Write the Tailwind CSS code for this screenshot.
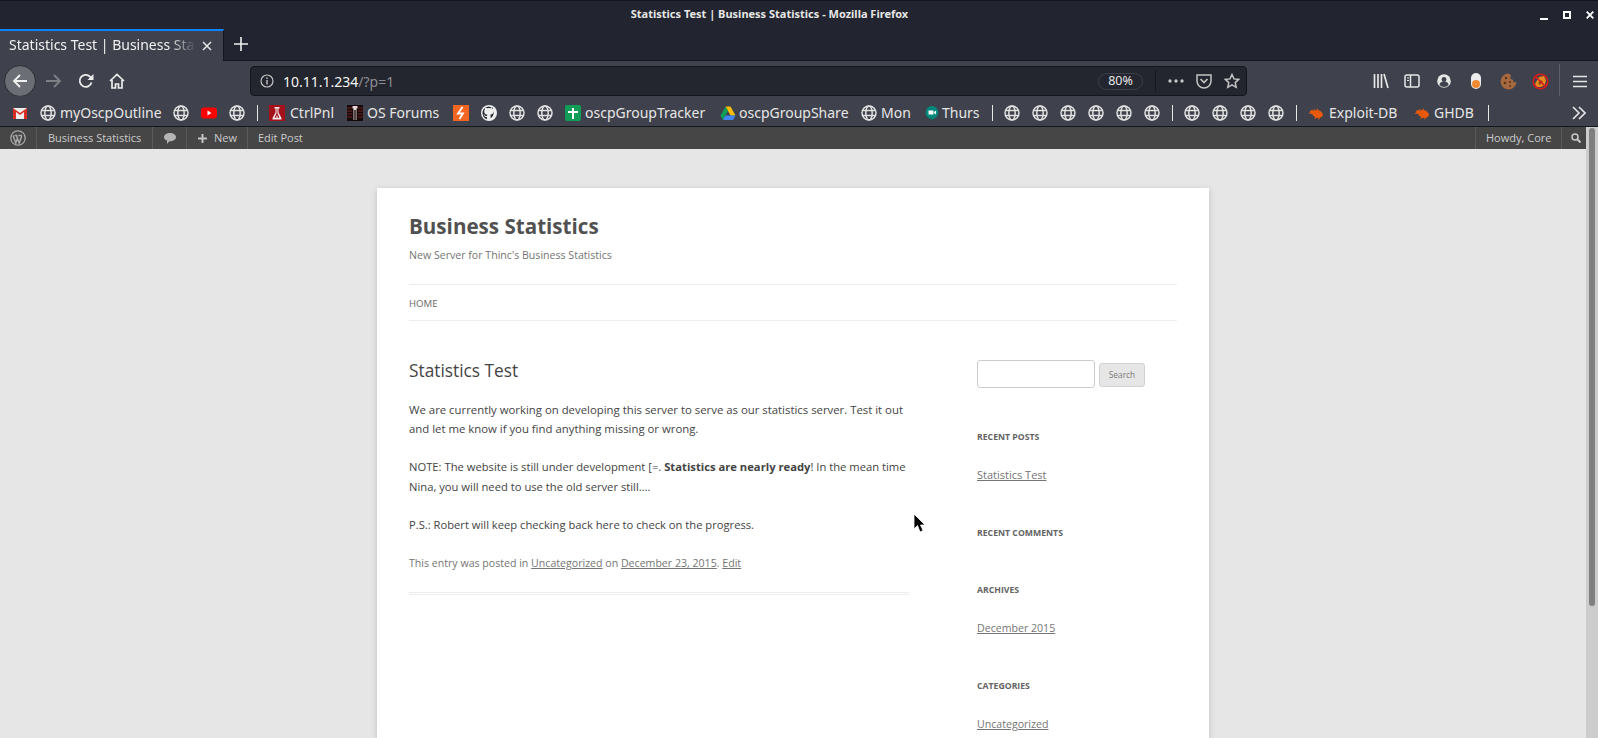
<!DOCTYPE html>
<html lang="en">
<head>
    <meta charset="UTF-8">
    <meta name="viewport" content="width=device-width, initial-scale=1.0">
    <title>Statistics Test | Business Statistics</title>
    <script src="https://cdn.jsdelivr.net/npm/@tailwindcss/browser@4"></script>
</head>
<body class="h-[738px] w-[1598px] overflow-hidden bg-[#22252f] font-['Noto_Sans',sans-serif]">
    <svg class="hidden">
        <symbol id="globe" viewBox="0 0 16 16">
            <g fill="none" stroke="#e0e0e0" stroke-width="1.5">
                <circle cx="8" cy="8" r="7"/>
                <ellipse cx="8" cy="8" rx="3.2" ry="7"/>
                <path d="M1.5 5.5h13M1.5 10.5h13"/>
            </g>
        </symbol>
        <symbol id="bug" viewBox="0 0 16 16">
            <g fill="#e8590c">
                <ellipse cx="9.500" cy="9" rx="5.500" ry="3.800" transform="rotate(15 9.500 9)"/>
                <circle cx="4" cy="7" r="2"/>
            </g>
            <path d="M1 8.500l3-1M5.500 4l2 2.500M9 3.500l1 3M7 14l1-2.500M11 14.500v-2.500" stroke="#e8590c" fill="none"/>
        </symbol>
    </svg>

    <div class="flex h-[738px] flex-col">
        <!-- Title bar -->
        <div class="relative flex h-[29px] shrink-0 items-center justify-center border-t border-[#14161c] bg-[#22252f] pr-[59px] pb-[2px]">
            <span class="text-[11px] font-bold text-[#e6e6e6]">Statistics Test | Business Statistics - Mozilla Firefox</span>
            <div class="absolute top-[9px] right-[4px] flex items-center gap-[15px]">
                <svg class="h-[10px] w-[8px]" viewBox="0 0 8 10"><path d="M0 8h8v2H0z" fill="#fff"/></svg>
                <svg class="h-[8px] w-[8px]" viewBox="0 0 8 8"><path d="M1 1h6v6H1z" fill="none" stroke="#fff" stroke-width="2"/></svg>
                <svg class="h-[8px] w-[8px]" viewBox="0 0 8 8"><path d="M.7.7l6.6 6.6M7.3.7L.7 7.3" stroke="#fff" stroke-width="1.8"/></svg>
            </div>
        </div>

        <!-- Tab bar -->
        <div class="flex h-[32px] shrink-0 items-stretch border-b border-[#14161c] bg-[#22252f]">
            <div class="relative -mb-px flex w-[224px] items-center border-t-2 border-r border-t-[#0a84ff] border-r-[#14161c] bg-[#3f424c] pb-[3px] pl-[9px]">
                <span class="w-[187px] overflow-hidden whitespace-nowrap text-[14px] text-[#f0f0f0] [mask-image:linear-gradient(to_right,black_160px,transparent_187px)]">Statistics Test | Business Statistics</span>
                <svg class="absolute left-[202px] top-[10px] h-[10px] w-[10px]" viewBox="0 0 10 10"><path d="M1 1l8 8M9 1l-8 8" stroke="#e6e6e6" stroke-width="1.5"/></svg>
            </div>
            <svg class="ml-[10px] mt-[8px] h-[14px] w-[14px]" viewBox="0 0 14 14"><path d="M7 0v14M0 7h14" stroke="#f0f0f0" stroke-width="1.6"/></svg>
        </div>

        <!-- Navigation toolbar -->
        <div class="relative flex h-[35px] shrink-0 items-center bg-[#3f424c] pt-[5px]">
            <div class="absolute left-[4px] top-[4px] flex h-[32px] w-[32px] items-center justify-center rounded-full border border-[#2b2d35] bg-[#6c6e75]">
                <svg class="h-[16px] w-[16px]" viewBox="0 0 16 16"><path d="M15 8H2M8 2L2 8l6 6" fill="none" stroke="#f2f2f2" stroke-width="1.8"/></svg>
            </div>
            <svg class="ml-[45px] h-[16px] w-[17px]" viewBox="0 0 17 16"><path d="M1 8h14M9 2l6 6-6 6" fill="none" stroke="#7f8187" stroke-width="1.8"/></svg>
            <svg class="ml-[16px] h-[16px] w-[16px]" viewBox="0 0 16 16"><path d="M13.5 9.5A6 6 0 1 1 12 3.6L14 6" fill="none" stroke="#ececec" stroke-width="1.8"/><path d="M15.5 1v6h-6z" fill="#ececec"/></svg>
            <svg class="ml-[15px] h-[16px] w-[16px]" viewBox="0 0 16 16"><path d="M1 8l7-6.5L15 8M3 7v8h3.5v-4h3v4H13V7" fill="none" stroke="#ececec" stroke-width="1.7"/></svg>

            <!-- URL bar -->
            <div class="relative ml-[125px] flex h-[30px] w-[997px] items-center rounded-[4px] border border-[#14161c] bg-[#23252f] pl-[9px]">
                <svg class="h-[14px] w-[14px]" viewBox="0 0 14 14"><circle cx="7" cy="7" r="6" fill="none" stroke="#c4c4c4" stroke-width="1.2"/><path d="M7 6v4.500M7 3.400v1.500" stroke="#c4c4c4" stroke-width="1.400"/></svg>
                <span class="ml-[9px] text-[14px] text-[#f5f5f5]">10.11.1.234<span class="text-[#8b8c91]">/?p=1</span></span>
                <div class="ml-auto flex items-center">
                    <span class="flex h-[17px] w-[45px] items-center justify-center rounded-full border border-[#3c3f4a] text-[12.5px] text-[#e6e6e6]">80%</span>
                    <span class="ml-[12px] h-[22px] w-px bg-[#14161c]"></span>
                    <svg class="ml-[12px] h-[4px] w-[16px]" viewBox="0 0 16 4"><circle cx="2" cy="2" r="1.700" fill="#c4c4c4"/><circle cx="8" cy="2" r="1.700" fill="#c4c4c4"/><circle cx="14" cy="2" r="1.700" fill="#c4c4c4"/></svg>
                    <svg class="ml-[12px] h-[16px] w-[16px]" viewBox="0 0 16 16"><path d="M1 2h14v6a7 7 0 0 1-14 0z" fill="none" stroke="#c4c4c4" stroke-width="1.500"/><path d="M4.500 6L8 9.500 11.500 6" fill="none" stroke="#c4c4c4" stroke-width="1.700"/></svg>
                    <svg class="ml-[12px] mr-[6px] h-[16px] w-[16px]" viewBox="0 0 16 16"><path d="M8 1.500l2 4.400 4.700.5-3.500 3.200 1 4.700L8 11.900l-4.200 2.400 1-4.700L1.300 6.400 6 5.900z" fill="none" stroke="#c4c4c4" stroke-width="1.500"/></svg>
                </div>
            </div>

            <!-- Toolbar icons -->
            <svg class="ml-[126px] h-[16px] w-[16px]" viewBox="0 0 16 16"><path d="M1.500 1v14M5 1v14M8.500 1v14M11 1l4 14" stroke="#e6e6e6" stroke-width="1.700" fill="none"/></svg>
            <svg class="ml-[15px] h-[16px] w-[16px]" viewBox="0 0 16 16"><rect x="1" y="2" width="14" height="12" rx="2" fill="none" stroke="#e6e6e6" stroke-width="1.500"/><path d="M6.500 2v12" stroke="#e6e6e6" stroke-width="1.500"/><path d="M3 5h2M3 7.500h2" stroke="#e6e6e6"/></svg>
            <svg class="ml-[17px] h-[14px] w-[14px]" viewBox="0 0 14 14"><circle cx="7" cy="7" r="6.800" fill="#e6e6e6"/><circle cx="7" cy="5.500" r="2.400" fill="#3f424c"/><path d="M2.500 11a4.500 3.500 0 0 1 9 0 6 6 0 0 1-9 0z" fill="#3f424c"/></svg>
            <div class="relative ml-[20px] h-[16px] w-[10px] overflow-hidden rounded-full bg-[#ececec]">
                <div class="absolute bottom-[1px] left-[1px] h-[8px] w-[8px] rounded-full bg-[#f08a35]"></div>
            </div>
            <svg class="ml-[19px] h-[17px] w-[17px]" viewBox="0 0 17 17"><path d="M8.500.500a8 8 0 1 0 8 8.500l-2.500.5-1.500-3-2.500-1 1-3z" fill="#a5683f"/><circle cx="6" cy="5" r="1.200" fill="#5a3318"/><circle cx="5" cy="10" r="1.300" fill="#5a3318"/><circle cx="10" cy="9" r="1.100" fill="#5a3318"/><circle cx="10" cy="13" r="1" fill="#5a3318"/></svg>
            <svg class="ml-[15px] h-[17px] w-[17px]" viewBox="0 0 17 17"><path d="M3 11l4-7 5-1 2 4-1 5-4 2H5z" fill="#e88a1f"/><path d="M6 10l3-3 2 2-3 3z" fill="#8a4a12"/><circle cx="8.500" cy="8.500" r="7.300" fill="none" stroke="#d81c1c" stroke-width="1.600"/><path d="M3.300 3.300l10.400 10.400" stroke="#d81c1c" stroke-width="1.600"/></svg>
            <span class="ml-[10px] h-[34px] w-px bg-[#5e6068]"></span>
            <svg class="ml-[13px] h-[13px] w-[14px]" viewBox="0 0 14 13"><path d="M0 1.500h14M0 6.500h14M0 11.500h14" stroke="#e6e6e6" stroke-width="1.700"/></svg>
        </div>

        <!-- Bookmarks toolbar -->
        <div class="relative flex h-[31px] shrink-0 items-center border-b border-[#14161c] bg-[#3f424c] pt-[3px] pl-[12px] text-[14px] text-[#e6e6e6]">
            <svg class="h-[16px] w-[16px]" viewBox="0 0 16 16"><path d="M1 3h14v11H1z" fill="#eee"/><path d="M1 3v11h3V7l4 3 4-3v7h3V3l-7 5z" fill="#d93025"/></svg>
            <svg class="ml-[12px] h-[16px] w-[16px]"><use href="#globe"/></svg>
            <span class="ml-[4px] w-[101px]">myOscpOutline</span>
            <svg class="ml-[12px] h-[16px] w-[16px]"><use href="#globe"/></svg>
            <svg class="ml-[12px] h-[16px] w-[16px]" viewBox="0 0 16 16"><rect y="2.500" width="16" height="11" rx="3" fill="#f00"/><path d="M6.500 5.500v5l4-2.500z" fill="#fff"/></svg>
            <svg class="ml-[12px] h-[16px] w-[16px]"><use href="#globe"/></svg>
            <span class="ml-[12px] h-[16px] w-px bg-[#e6e6e6]"></span>
            <svg class="ml-[11px] h-[16px] w-[16px]" viewBox="0 0 16 16"><rect width="16" height="16" fill="#a5111a"/><path d="M5.500 2h5v1.500h-1v4l3 5.500v1.500h-9V13l3-5.500v-4h-1z" fill="#f2e6e6"/><path d="M7.600 3.500h.8v4.500l2 4.800H8.800L8 9.500l-.8 3.300H5.600l2-4.800z" fill="#a5111a"/></svg>
            <span class="ml-[5px] w-[46px]">CtrlPnl</span>
            <svg class="ml-[11px] h-[16px] w-[16px]" viewBox="0 0 16 16"><rect width="16" height="16" fill="#16090a"/><path d="M0 3h5M0 6h5M0 9h5M0 12h5M11 3h5M11 6h5M11 9h5M11 12h5" stroke="#6d2020"/><path d="M5.500 1h5v2.500H9.500V15H8.700V5h-1.400v10H6.500V3.500h-1z" fill="#e8d8d8"/></svg>
            <span class="ml-[4px] w-[75px]">OS Forums</span>
            <svg class="ml-[11px] h-[16px] w-[16px]" viewBox="0 0 16 16"><rect width="16" height="16" fill="#f26522"/><path d="M9.500 2L5 8.500h5L6.500 14" fill="none" stroke="#fff" stroke-width="1.800"/></svg>
            <svg class="ml-[12px] h-[16px] w-[16px]" viewBox="0 0 16 16"><circle cx="8" cy="8" r="8" fill="#f0f0f0"/><path d="M8 1.500a6.500 6.500 0 0 0-2 12.700v-2.200c-2 .4-2.400-1-2.400-1-.4-.8-.8-1-.8-1-.7-.5 0-.5 0-.5.7 0 1.100.7 1.100.7.600 1.100 1.700.8 2.100.6 0-.5.300-.8.500-1-1.600-.2-3.300-.8-3.300-3.500 0-.8.300-1.400.7-1.900 0-.2-.3-.9.100-1.900 0 0 .600-.2 2 .7a7 7 0 0 1 3.600 0c1.400-.9 2-.7 2-.7.400 1 .100 1.700.100 1.900.4.500.7 1.100.7 1.900 0 2.700-1.700 3.300-3.300 3.500.3.200.5.700.5 1.300v2.100A6.500 6.500 0 0 0 8 1.500z" fill="#24292e"/></svg>
            <svg class="ml-[12px] h-[16px] w-[16px]"><use href="#globe"/></svg>
            <svg class="ml-[12px] h-[16px] w-[16px]"><use href="#globe"/></svg>
            <svg class="ml-[12px] h-[16px] w-[16px]" viewBox="0 0 16 16"><rect width="16" height="16" rx="2" fill="#0f9d58"/><path d="M7 3h2v3h4v2H9v6H7V8H3V6h4z" fill="#fff"/></svg>
            <span class="ml-[4px] w-[121px]">oscpGroupTracker</span>
            <svg class="ml-[14px] h-[16px] w-[16px]" viewBox="0 0 16 16"><path d="M5.500 1.500h5l5 9h-5z" fill="#fbbc04"/><path d="M5.500 1.500L.5 10.500 3 15l5-9z" fill="#0f9d58"/><path d="M3 15h10l2.500-4.500h-10z" fill="#4285f4"/></svg>
            <span class="ml-[3px] w-[109px]">oscpGroupShare</span>
            <svg class="ml-[13px] h-[16px] w-[16px]"><use href="#globe"/></svg>
            <span class="ml-[4px] w-[29px]">Mon</span>
            <svg class="ml-[14px] h-[16px] w-[16px]" viewBox="0 0 16 16"><path d="M8 1a6.500 6.500 0 0 1 1 12.900L8 16v-2A6.500 6.500 0 0 1 8 1z" fill="#00897b"/><path d="M4.500 5.500h5v4h-5zM10 7l2-1.500v4L10 8z" fill="#fff"/></svg>
            <span class="ml-[2px] w-[38px]">Thurs</span>
            <span class="ml-[12px] h-[16px] w-px bg-[#e6e6e6]"></span>
            <svg class="ml-[11px] h-[16px] w-[16px]"><use href="#globe"/></svg>
            <svg class="ml-[12px] h-[16px] w-[16px]"><use href="#globe"/></svg>
            <svg class="ml-[12px] h-[16px] w-[16px]"><use href="#globe"/></svg>
            <svg class="ml-[12px] h-[16px] w-[16px]"><use href="#globe"/></svg>
            <svg class="ml-[12px] h-[16px] w-[16px]"><use href="#globe"/></svg>
            <svg class="ml-[12px] h-[16px] w-[16px]"><use href="#globe"/></svg>
            <span class="ml-[12px] h-[16px] w-px bg-[#e6e6e6]"></span>
            <svg class="ml-[11px] h-[16px] w-[16px]"><use href="#globe"/></svg>
            <svg class="ml-[12px] h-[16px] w-[16px]"><use href="#globe"/></svg>
            <svg class="ml-[12px] h-[16px] w-[16px]"><use href="#globe"/></svg>
            <svg class="ml-[12px] h-[16px] w-[16px]"><use href="#globe"/></svg>
            <span class="ml-[12px] h-[16px] w-px bg-[#e6e6e6]"></span>
            <svg class="ml-[11px] h-[16px] w-[16px]"><use href="#bug"/></svg>
            <span class="ml-[5px] w-[72px]">Exploit-DB</span>
            <svg class="ml-[13px] h-[16px] w-[16px]"><use href="#bug"/></svg>
            <span class="ml-[4px] w-[42px]">GHDB</span>
            <span class="ml-[12px] h-[16px] w-px bg-[#e6e6e6]"></span>
            <svg class="absolute left-[1572px] top-[10px] h-[14px] w-[14px]" viewBox="0 0 14 14"><path d="M1 1l6 6-6 6M7 1l6 6-6 6" fill="none" stroke="#e6e6e6" stroke-width="1.600"/></svg>
        </div>

        <!-- Page viewport -->
        <div class="relative flex min-h-0 flex-1">
            <div class="flex min-w-0 flex-1 flex-col bg-[#e6e6e6] font-['Open_Sans',sans-serif]">
                <!-- WordPress admin bar -->
                <div class="flex h-[22px] shrink-0 items-center bg-[#464646] text-[11px] text-[#cccccc]">
                    <div class="flex h-full w-[37px] items-center justify-center border-r border-[#5a5a5a]">
                        <svg class="h-[16px] w-[16px]" viewBox="0 0 16 16"><circle cx="8" cy="8" r="7.200" fill="none" stroke="#a8a8a8" stroke-width="1.300"/><path d="M3 5.500l2.800 7.500 1.700-4.800L6.300 5.500M6.300 5.500l3 7.500L11.400 7c.4-1.200-.2-1.900-.7-2.200M4.500 5.500h3M8.500 5.500h2.200" fill="none" stroke="#a8a8a8" stroke-width="1.500"/></svg>
                    </div>
                    <div class="flex h-full w-[116px] items-center border-r border-[#5a5a5a] pl-[11px]">Business Statistics</div>
                    <div class="flex h-full w-[34px] items-center justify-center border-r border-[#5a5a5a]">
                        <svg class="h-[11px] w-[12px]" viewBox="0 0 12 11"><path d="M6 0c3.300 0 6 1.800 6 4.200 0 2.300-2.700 4-6 4l-.6 0L3 11V7.600C1.200 7 0 5.700 0 4.200 0 1.800 2.700 0 6 0z" fill="#b4b4b4"/></svg>
                    </div>
                    <div class="flex h-full w-[61px] items-center border-r border-[#5a5a5a] pl-[11px]">
                        <svg class="h-[9px] w-[9px]" viewBox="0 0 9 9"><path d="M4.500 0v9M0 4.500h9" stroke="#c4c4c4" stroke-width="2"/></svg>
                        <span class="ml-[7px]">New</span>
                    </div>
                    <div class="pl-[10px]">Edit Post</div>
                    <div class="ml-auto flex h-full w-[86px] items-center border-l border-[#5a5a5a] pl-[10px]">Howdy, Core</div>
                    <div class="flex h-full w-[25px] items-center border-l border-[#5a5a5a] pl-[9px]">
                        <svg class="h-[10px] w-[10px]" viewBox="0 0 10 10"><circle cx="4" cy="4" r="3" fill="none" stroke="#c8c8c8" stroke-width="1.500"/><path d="M6 6l3.500 3.500" stroke="#c8c8c8" stroke-width="2"/></svg>
                    </div>
                </div>

                <!-- Page card -->
                <div class="mt-[38.5px] ml-[377px] w-[832px] flex-1 bg-white px-[32px] text-[11.2px] leading-[19.2px] text-[#444444] shadow-[0_2px_6px_rgba(100,100,100,0.3)]">
                    <h1 class="pt-[24px] text-[20.6px] leading-[29px] font-bold text-[#515151]">Business Statistics</h1>
                    <p class="mt-[5px] text-[10.6px] text-[#757575]">New Server for Thinc's Business Statistics</p>
                    <nav class="mt-[19.5px] flex h-[37px] items-center border-y border-[#ededed] pt-px text-[9.6px] text-[#6a6a6a] uppercase">Home</nav>

                    <div class="flex items-start">
                        <article class="w-[500px] pt-[36.5px]">
                            <h2 class="text-[17.3px] leading-[26px] text-[#444444]">Statistics Test</h2>
                            <p class="mt-[16px] text-[11.36px]">We are currently working on developing this server to serve as our statistics server. Test it out and let me know if you find anything missing or wrong.</p>
                            <p class="mt-[19.2px] text-[11.22px]">NOTE: The website is still under development [=. <strong class="font-bold">Statistics are nearly ready</strong>! In the mean time Nina, you will need to use the old server still….</p>
                            <p class="mt-[19.2px]">P.S.: Robert will keep checking back here to check on the progress.</p>
                            <p class="mt-[20px] text-[10.6px] text-[#757575]">This entry was posted in <a class="underline">Uncategorized</a> on <a class="underline">December 23, 2015</a>. <a class="underline">Edit</a></p>
                            <div class="mt-[19px] h-[3px] border-y border-[#ededed]"></div>
                        </article>

                        <aside class="ml-[68px] w-[200px] pt-[39px] text-[10.6px] text-[#757575]">
                            <div class="flex items-start">
                                <input class="h-[28px] w-[118px] rounded-[3px] border border-[#cccccc] bg-white" type="text">
                                <button class="mt-[3px] ml-[4px] h-[24px] w-[46px] rounded-[3px] border border-[#d2d2d2] bg-[#e6e6e6] pb-px text-[8.4px] text-[#7c7c7c]">Search</button>
                            </div>
                            <h3 class="mt-[40px] text-[8.7px] font-bold text-[#636363] uppercase">Recent Posts</h3>
                            <a class="mt-[17.8px] block text-[11px] underline">Statistics Test</a>
                            <h3 class="mt-[39.8px] text-[8.7px] font-bold text-[#636363] uppercase">Recent Comments</h3>
                            <h3 class="mt-[37.8px] text-[8.7px] font-bold text-[#636363] uppercase">Archives</h3>
                            <a class="mt-[18.8px] block underline">December 2015</a>
                            <h3 class="mt-[38.8px] text-[8.7px] font-bold text-[#636363] uppercase">Categories</h3>
                            <a class="mt-[18.8px] block underline">Uncategorized</a>
                        </aside>
                    </div>
                </div>
            </div>

            <!-- Scrollbar -->
            <div class="relative w-[12px] shrink-0 bg-[#cccccc]">
                <div class="absolute top-[1px] left-[3px] h-[478px] w-[6px] rounded-full bg-[#7f7f7f]"></div>
            </div>

            <!-- Mouse cursor -->
            <svg class="absolute left-[913px] top-[386px] h-[21px] w-[13px]" viewBox="0 0 13 21"><path d="M1 1v15l3.500-3.500L7 19l3-1.500-2.500-5.500H12z" fill="#000" stroke="#fff" stroke-width=".8"/></svg>
        </div>
    </div>
</body>
</html>
